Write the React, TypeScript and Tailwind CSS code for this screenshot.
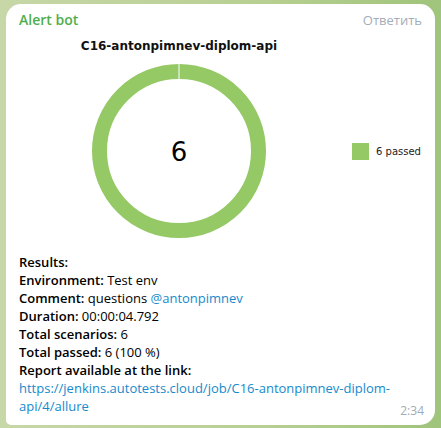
const passed = 6;

function Donut() {
  return (
    <svg width="176" height="176" viewBox="0 0 176 176">
      <circle cx="88" cy="88" r="79.5" fill="none" stroke="#94c965" strokeWidth="15" />
      <line x1="88" y1="0" x2="88" y2="16" stroke="#ffffff" strokeWidth="1" />
      <text
        x="88"
        y="98"
        textAnchor="middle"
        fontSize="26"
        fill="#000"
        style={{ fontFamily: '"DejaVu Sans", sans-serif' }}
      >
        {passed}
      </text>
    </svg>
  );
}

export default function App() {
  return (
    <div className="h-[428px] w-[441px] overflow-hidden bg-[linear-gradient(90deg,#c7d7a8_0%,#b7cf92_60%,#9fc47b_100%)] pl-[6px] pt-[4px]">
      <div className="relative w-[429px] rounded-[15px] rounded-bl-[5px] bg-white pb-[10px] pl-[13px] pr-[13px] pt-[6px] font-['Open_Sans',sans-serif] text-black">
        <div className="flex h-[20px] items-center justify-between">
          <span className="text-[14px] font-semibold leading-[20px] text-[#4fae4e]">Alert bot</span>
          <span className="text-[13px] leading-[20px] text-[#a3adb7]">Ответить</span>
        </div>

        <div className="mt-[9px] flex h-[206px]">
          <div className="flex w-[320px] flex-col items-center">
            <div className="font-['DejaVu_Sans',sans-serif] text-[12px] font-bold leading-[14px] text-[#111]">
              C16-antonpimnev-diplom-api
            </div>
            <div className="mt-[10px]">
              <Donut />
            </div>
          </div>
          <div className="flex items-start pl-[13px] pt-[104px]">
            <div className="flex items-center gap-[7px]">
              <div className="h-[17px] w-[17px] bg-[#94c965]" />
              <span className="font-['DejaVu_Sans',sans-serif] text-[10px] text-[#222]">{passed} passed</span>
            </div>
          </div>
        </div>

        <div className="mt-[8px] text-[13px] leading-[18px]">
          <div className="font-semibold">Results:</div>
          <div>
            <span className="font-semibold">Environment:</span> Test env
          </div>
          <div>
            <span className="font-semibold">Comment:</span> questions{" "}
            <span className="text-[#168acd]">@antonpimnev</span>
          </div>
          <div>
            <span className="font-semibold">Duration:</span> 00:00:04.792
          </div>
          <div>
            <span className="font-semibold">Total scenarios:</span> 6
          </div>
          <div>
            <span className="font-semibold">Total passed:</span> 6 (100 %)
          </div>
          <div className="font-semibold">Report available at the link:</div>
          <div className="w-[375px] text-[#168acd]">
            https://jenkins.autotests.cloud/job/C16-antonpimnev-diplom-api/4/allure
          </div>
        </div>

        <span className="absolute bottom-[6px] right-[11px] text-[12px] leading-[16px] text-[#a0acb6]">2:34</span>
      </div>
    </div>
  );
}
